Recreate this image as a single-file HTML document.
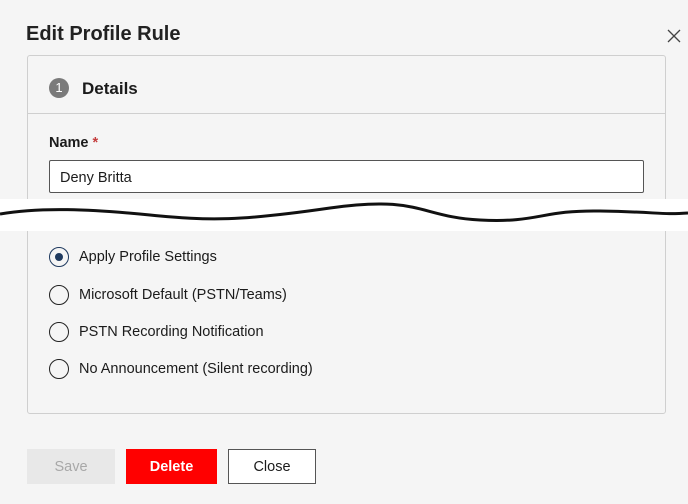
<!DOCTYPE html><html><head><style>
body{margin:0;width:688px;height:504px;background:#f5f5f5;font-family:"Liberation Sans",sans-serif;position:relative;overflow:hidden;color:#1b1b1b}
.a{position:absolute}
.title{left:26px;top:23px;font-size:20px;font-weight:bold;color:#222}
.card{left:27px;top:55px;width:639px;height:359px;border:1px solid #cfcfcf;border-radius:3px;box-sizing:border-box}
.r{position:absolute;left:49px;width:20px;height:20px;border:1.5px solid #222;border-radius:50%;box-sizing:border-box}
.lbl{position:absolute;left:79px;font-size:14.5px}
.btn{position:absolute;top:449px;height:35px;box-sizing:border-box;font-size:14.5px;display:flex;align-items:center;justify-content:center}
</style></head><body>
<div class="a title">Edit Profile Rule</div>
<svg class="a" style="left:666px;top:28px" width="16" height="16"><path d="M2 2L14 14M14 2L2 14" stroke="#444" stroke-width="1.3"/></svg>
<div class="a card"></div>
<div class="a" style="left:28px;top:113px;width:638px;height:1px;background:#cfcfcf"></div>
<div class="a" style="left:49px;top:78px;width:20px;height:20px;border-radius:50%;background:#7a7a7a;color:#fff;font-size:13px;text-align:center;line-height:20px">1</div>
<div class="a" style="left:82px;top:79px;font-size:17px;font-weight:bold">Details</div>
<div class="a" style="left:49px;top:135px;font-size:14.5px;font-weight:bold">Name <span style="color:#c43d3d">*</span></div>
<div class="a" style="left:49px;top:160px;width:595px;height:33px;border:1px solid #555;border-radius:2px;box-sizing:border-box;background:#fff;font-size:14.5px;padding:9px 0 0 10px">Deny Britta</div>
<div class="a" style="left:0;top:199px;width:688px;height:32px;background:#fff"></div>
<svg class="a" style="left:0;top:199px" width="688" height="32"><path d="M0 15C40 8 90 10 150 16S240 22 330 9S420 18 480 21S540 11 600 12S660 16 688 14" fill="none" stroke="#111" stroke-width="3"/></svg>
<div class="r" style="top:247px;border-color:#1f3a5f"><div style="position:absolute;left:4.5px;top:4.5px;width:8px;height:8px;border-radius:50%;background:#1f3a5f"></div></div>
<div class="lbl" style="top:249px">Apply Profile Settings</div>
<div class="r" style="top:285px"></div><div class="lbl" style="top:287px">Microsoft Default (PSTN/Teams)</div>
<div class="r" style="top:322px"></div><div class="lbl" style="top:324px">PSTN Recording Notification</div>
<div class="r" style="top:359px"></div><div class="lbl" style="top:361px">No Announcement (Silent recording)</div>
<div class="btn" style="left:27px;width:88px;background:#e8e8e8;color:#a8a8a8">Save</div>
<div class="btn" style="left:126px;width:91px;background:#ff0000;color:#fff;font-weight:bold">Delete</div>
<div class="btn" style="left:228px;width:88px;border:1px solid #555;background:#fff">Close</div>
</body></html>
